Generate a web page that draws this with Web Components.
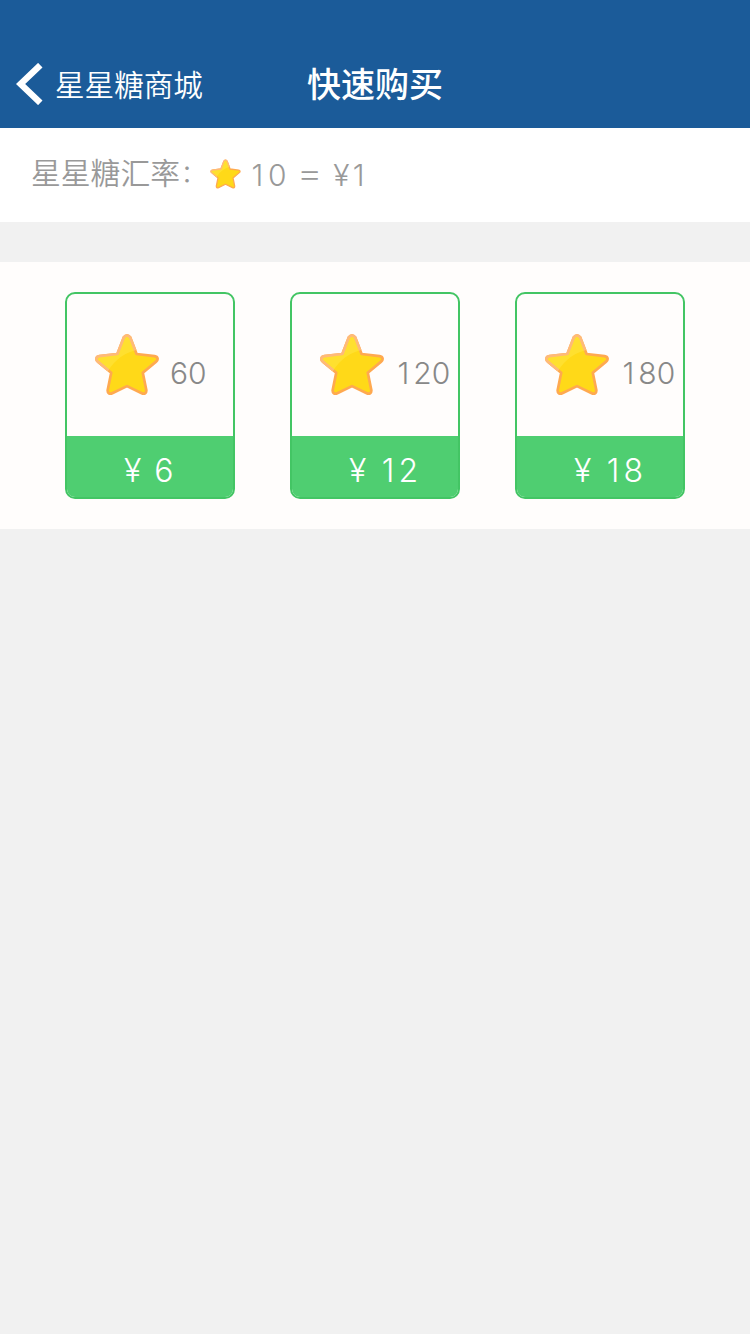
<!DOCTYPE html>
<html lang="zh-CN">
<head>
<meta charset="utf-8">
<title>快速购买</title>
<style>
html,body{margin:0;height:100%}
body{background:#f1f1f1;font-family:Inter,"Noto Sans CJK SC",sans-serif;overflow:hidden}
</style>
</head>
<body>
<quick-buy-page></quick-buy-page>
<script>
const define = (name, html) => {
  const t = document.createElement('template');
  t.innerHTML = html;
  customElements.define(name, class extends HTMLElement {
    constructor() {
      super();
      this.attachShadow({mode: 'open'}).append(t.content.cloneNode(true));
    }
  });
};

define('candy-star', `
<style>
:host{display:block;width:64px;height:63px;flex:none}
svg{display:block;width:100%;height:100%}
</style>
<svg viewBox="0 0 64 63">
<defs>
<path id="s" d="M28.8 4.4Q32 .2 35.2 4.4L41.6 21L59.6 23.2C63 23.7 63.5 26.6 61.1 28.6L47.8 39.7L51.3 57C51.6 60.2 49.4 61.5 46.7 60.2L32 53.1L17.3 60.2C14.6 61.5 12.4 60.2 12.7 57L16.2 39.7L2.9 28.6C.5 26.6 1 23.7 4.4 23.2L22.4 21Z"/>
<clipPath id="c"><path d="M0 0H45V16Q24 20 13 38H0Z"/></clipPath>
</defs>
<use href="#s" fill="#ffd918" stroke="#ffa950" stroke-width="2.7" stroke-linejoin="round"/>
<use href="#s" fill="#ffe02f" stroke="#ffba78" stroke-width="2.7" stroke-linejoin="round" clip-path="url(#c)"/>
</svg>`);

define('nav-bar', `
<style>
:host{display:grid;grid-template-columns:1fr auto 1fr;align-items:center;box-sizing:border-box;height:128px;padding:40px 16px 0;background:#1b5b99;color:#fff}
.back{display:flex;align-items:center;font-size:29.6px;font-weight:350;line-height:44px}
.back span{padding-top:2px}
svg{width:27px;height:42px;margin-right:12px}
.title{font-size:34px;line-height:48px;font-weight:450;padding-top:1px}
</style>
<div class="back"><svg viewBox="0 0 27 42"><path d="M24.3 2.2L4.6 21L24.3 39.8" fill="none" stroke="#fff" stroke-width="6.4"/></svg><span><slot name="back"></slot></span></div>
<div class="title"><slot></slot></div>`);

define('rate-bar', `
<style>
:host{display:flex;align-items:center;box-sizing:border-box;height:94px;padding:0 31px 2px;background:#fff;color:#999;font-size:29.8px;font-weight:350;line-height:44px}
.label{width:179px;white-space:nowrap;padding-bottom:2px}
candy-star{width:31px;height:30px}
.value{margin-left:8px;padding-top:2px;font-size:30px;letter-spacing:.6px;font-weight:300;word-spacing:2px;white-space:pre}
</style>
<span class="label"><slot></slot></span><candy-star></candy-star><span class="value"><slot name="value"></slot></span>`);

define('price-card', `
<style>
:host{display:flex;flex-direction:column;box-sizing:border-box;width:170px;height:207px;border:2px solid #43c564;border-radius:10px;overflow:hidden}
.top{display:flex;align-items:center;height:140px;padding:0 0 2px 28px;color:#888;font-size:30px;font-weight:300}
.top span{margin:18px 0 0 11px}
.bottom{flex:1;display:flex;align-items:center;padding:7px 0 0 57px;background:#4fce71;color:#fff;font-size:32px;font-weight:300;word-spacing:4px;white-space:pre}
</style>
<div class="top"><candy-star></candy-star><span><slot></slot></span></div>
<div class="bottom"><slot name="price"></slot></div>`);

define('price-list', `
<style>
:host{display:flex;gap:55px;box-sizing:border-box;height:267px;margin-top:40px;padding:30px 65px;background:#fffdfc}
</style><slot></slot>`);

define('quick-buy-page', `
<style>
:host{display:block;width:750px}
i{font-style:normal}
.one{margin:0 4px 0 2.5px}
.eq{display:inline-block;transform:translateY(-2px) scaleX(1.32);margin:0 2.5px 0 1.5px}
.colon{font-size:24px;vertical-align:2px;margin-left:1px}
</style>
<nav-bar><span slot="back">星星糖商城</span>快速购买</nav-bar>
<rate-bar>星星糖汇率<i class="colon">：</i><span slot="value"><i class="one">1</i>0 <i class="eq">=</i> ¥<i class="one">1</i></span></rate-bar>
<price-list>
<price-card>60<span slot="price">¥ 6</span></price-card>
<price-card><i class="one">1</i>20<span slot="price">¥ <i class="one">1</i>2</span></price-card>
<price-card><i class="one">1</i>80<span slot="price">¥ <i class="one">1</i>8</span></price-card>
</price-list>`);
</script>
</body>
</html>
